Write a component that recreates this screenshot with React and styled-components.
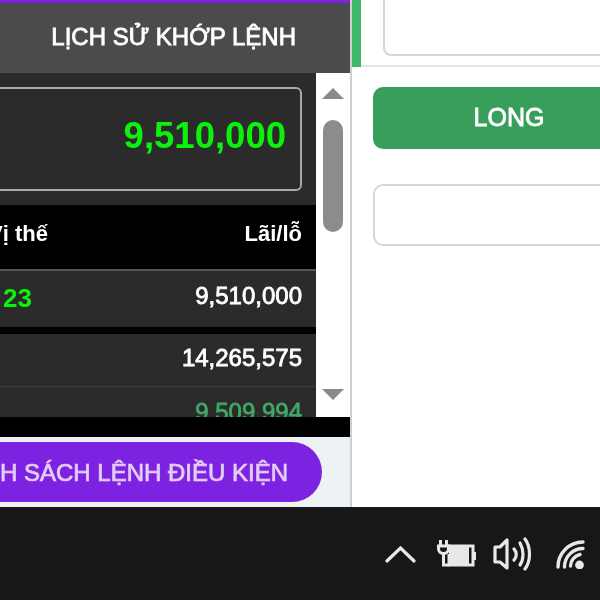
import styled, { createGlobalStyle } from "styled-components";

const GlobalStyle = createGlobalStyle`
    html, body {
        margin: 0;
        padding: 0;
        width: 600px;
        height: 600px;
        overflow: hidden;
        background: #17171a;
        font-family: "Liberation Sans", Arial, sans-serif;
    }
`
const Tela = styled.div`
    width: 600px;
    height: 600px;
    display: flex;
    flex-direction: column;
    overflow: hidden;
    filter: blur(0.45px);
`
const Janela = styled.div`
    height: 507px;
    display: flex;
    background: #ffffff;
`
const PainelEsquerdo = styled.div`
    width: 350px;
    flex: none;
    display: flex;
    flex-direction: column;
    border-right: 2px solid #cfcfcf;
    overflow: hidden;
`
const FaixaRoxa = styled.div`
    height: 3px;
    background: #7c22e0;
`
const Aba = styled.div`
    height: 70px;
    padding: 0 54px 3px 0;
    box-sizing: border-box;
    display: flex;
    align-items: center;
    justify-content: flex-end;
    background: #4b4b4b;
    color: #ffffff;
    font-size: 24px;
    -webkit-text-stroke: 0.8px #ffffff;
`
const AreaRolagem = styled.div`
    height: 344px;
    display: flex;
    background: #2b2b2b;
`
const Conteudo = styled.div`
    width: 316px;
    display: flex;
    flex-direction: column;
    align-items: flex-end;
    overflow: hidden;
`
const CaixaValor = styled.div`
    width: 340px;
    height: 104px;
    flex: none;
    margin: 14px 14px 14px 0;
    padding: 0 14px 6px 0;
    box-sizing: border-box;
    display: flex;
    align-items: center;
    justify-content: flex-end;
    border: 2px solid #a9a9a9;
    border-radius: 6px;
    color: #0cf20c;
    font-size: 36.5px;
    font-weight: bold;
`
const Linha = styled.div`
    width: 100%;
    height: ${(p) => p.$altura}px;
    flex: none;
    padding: 0 14px ${(p) => p.$baixo || 0}px 3px;
    box-sizing: border-box;
    display: flex;
    align-items: center;
    justify-content: space-between;
    background: ${(p) => (p.$cabecalho ? "#000000" : "#2b2b2b")};
    border-top: ${(p) => p.$borda || "none"};
    color: #ffffff;
    font-size: 24px;
`
const Titulo = styled.span`
    font-size: 22px;
    font-weight: bold;
`
const TituloCortado = styled(Titulo)`
    margin-left: -15px;
`
const Verde = styled.span`
    margin-top: 4px;
    color: #0cf20c;
    font-weight: bold;
    font-size: 26px;
`
const ValorLucro = styled.span`
    margin-left: auto;
    color: ${(p) => p.$cor || "#ffffff"};
    -webkit-text-stroke: 0.8px ${(p) => p.$cor || "#ffffff"};
`
const Separador = styled.div`
    width: 100%;
    height: 7px;
    flex: none;
    background: #000000;
`
const BarraRolagem = styled.div`
    width: 34px;
    flex: none;
    padding-top: 15px;
    box-sizing: border-box;
    display: flex;
    flex-direction: column;
    align-items: center;
    background: #ffffff;
`
const Seta = styled.div`
    width: 0;
    height: 0;
    border-left: 11px solid transparent;
    border-right: 11px solid transparent;
    border-bottom: ${(p) => (p.$baixo ? "none" : "11px solid #8a8a8a")};
    border-top: ${(p) => (p.$baixo ? "11px solid #8a8a8a" : "none")};
`
const Polegar = styled.div`
    width: 20px;
    height: 112px;
    margin: 21px 0 157px;
    border-radius: 10px;
    background: #8c8c8c;
`
const FaixaPreta = styled.div`
    height: 20px;
    background: #000000;
`
const Rodape = styled.div`
    flex: 1;
    padding: 5px 28px 0 0;
    display: flex;
    justify-content: flex-end;
    background: #eff2f5;
    overflow: hidden;
`
const BotaoRoxo = styled.div`
    width: 400px;
    height: 60px;
    flex: none;
    padding: 2px 34px 0 0;
    box-sizing: border-box;
    display: flex;
    align-items: center;
    justify-content: flex-end;
    border-radius: 0 30px 30px 0;
    background: #7c22e0;
    color: #e3cdf6;
    font-size: 24px;
    white-space: nowrap;
    -webkit-text-stroke: 0.7px #e3cdf6;
`
const PainelDireito = styled.div`
    flex: 1;
    min-width: 0;
    overflow: hidden;
    display: flex;
    flex-direction: column;
`
const Topo = styled.div`
    height: 67px;
    flex: none;
    display: flex;
    box-sizing: border-box;
    border-bottom: 2px solid #e4e4e4;
`
const FaixaVerde = styled.div`
    width: 9px;
    height: 67px;
    flex: none;
    background: #3cb96b;
`
const CampoTopo = styled.div`
    width: 300px;
    height: 66px;
    flex: none;
    margin: -10px 0 0 22px;
    box-sizing: border-box;
    border: 2px solid #d6d6d6;
    border-radius: 8px;
`
const Corpo = styled.div`
    padding: 20px 0 0 21px;
    display: flex;
    flex-direction: column;
    gap: 35px;
`
const BotaoLong = styled.div`
    width: 272px;
    height: 62px;
    padding-bottom: 2px;
    box-sizing: border-box;
    display: flex;
    align-items: center;
    justify-content: center;
    border-radius: 10px;
    background: #389e5b;
    color: #ffffff;
    font-size: 25px;
    -webkit-text-stroke: 0.8px #ffffff;
`
const Campo = styled.div`
    width: 300px;
    height: 62px;
    box-sizing: border-box;
    border: 2px solid #d6d6d6;
    border-radius: 10px;
`
const BarraTarefas = styled.div`
    flex: 1;
    padding-left: 385px;
    display: grid;
    grid-template-columns: 52px 56px 62px 30px;
    align-items: center;
    background: #17171a;
    color: #e8e8e8;
`

const Chevron = () => (
    <svg width="31" height="18" viewBox="0 0 31 18" fill="none" stroke="currentColor" strokeWidth="3.2" strokeLinecap="round">
        <path d="M2 16 L15.5 3 L29 16" />
    </svg>
)
const Bateria = () => (
    <svg width="39" height="28" viewBox="0 0 39 28" fill="none" stroke="currentColor" strokeWidth="3">
        <path d="M3.5 0 V6 M9.5 0 V6" />
        <path d="M1.5 6 H11.5 V8.5 C11.5 11.5 9.5 13.5 6.5 13.5 C3.5 13.5 1.5 11.5 1.5 8.5 Z" />
        <path d="M6.5 13.5 V25 H12" />
        <path d="M11 6 H36 V25 H12 V14" />
        <rect x="12" y="6" width="20" height="19" fill="currentColor" stroke="none" />
        <path d="M38 12 V20" />
    </svg>
)
const Volume = () => (
    <svg width="39" height="34" viewBox="0 0 39 34" fill="none" stroke="currentColor" strokeWidth="3.2" strokeLinecap="round" strokeLinejoin="round">
        <path d="M2 10 H7 L14 3 V31 L7 25 H2 Z" />
        <path d="M21 12 C24 15 24 20 21 23" />
        <path d="M27 6 C31 13 31 22 27 28" />
        <path d="M32 2 C38 10 38 24 32 32" />
    </svg>
)
const Wifi = () => (
    <svg width="30" height="30" viewBox="0 0 30 30" fill="none" stroke="currentColor" strokeWidth="3.4" strokeLinecap="round">
        <path d="M3 28 A25 25 0 0 1 28 3" />
        <path d="M9.5 28 A18.5 18.5 0 0 1 28 9.5" />
        <path d="M15.5 27 A12 12 0 0 1 25 15.5" />
        <circle cx="24.5" cy="26" r="4.4" fill="currentColor" stroke="none" />
    </svg>
)

const App = () => {
    return (
        <>
            <GlobalStyle />
            <Tela>
                <Janela>
                    <PainelEsquerdo>
                        <FaixaRoxa />
                        <Aba>LỊCH SỬ KHỚP LỆNH</Aba>
                        <AreaRolagem>
                            <Conteudo>
                                <CaixaValor>9,510,000</CaixaValor>
                                <Linha $cabecalho $altura={64} $baixo={6}>
                                    <TituloCortado>Vị thế</TituloCortado>
                                    <Titulo>Lãi/lỗ</Titulo>
                                </Linha>
                                <Linha $altura={58} $baixo={6} $borda="2px solid #555555">
                                    <Verde>23</Verde>
                                    <ValorLucro>9,510,000</ValorLucro>
                                </Linha>
                                <Separador />
                                <Linha $altura={52} $baixo={4}>
                                    <ValorLucro>14,265,575</ValorLucro>
                                </Linha>
                                <Linha $altura={50} $borda="1px solid #3c3c3c">
                                    <ValorLucro $cor="#3fa866">9,509,994</ValorLucro>
                                </Linha>
                            </Conteudo>
                            <BarraRolagem>
                                <Seta />
                                <Polegar />
                                <Seta $baixo />
                            </BarraRolagem>
                        </AreaRolagem>
                        <FaixaPreta />
                        <Rodape>
                            <BotaoRoxo>DANH SÁCH LỆNH ĐIỀU KIỆN</BotaoRoxo>
                        </Rodape>
                    </PainelEsquerdo>
                    <PainelDireito>
                        <Topo>
                            <FaixaVerde />
                            <CampoTopo />
                        </Topo>
                        <Corpo>
                            <BotaoLong>LONG</BotaoLong>
                            <Campo />
                        </Corpo>
                    </PainelDireito>
                </Janela>
                <BarraTarefas>
                    <Chevron />
                    <Bateria />
                    <Volume />
                    <Wifi />
                </BarraTarefas>
            </Tela>
        </>
    )
}

export default App;
